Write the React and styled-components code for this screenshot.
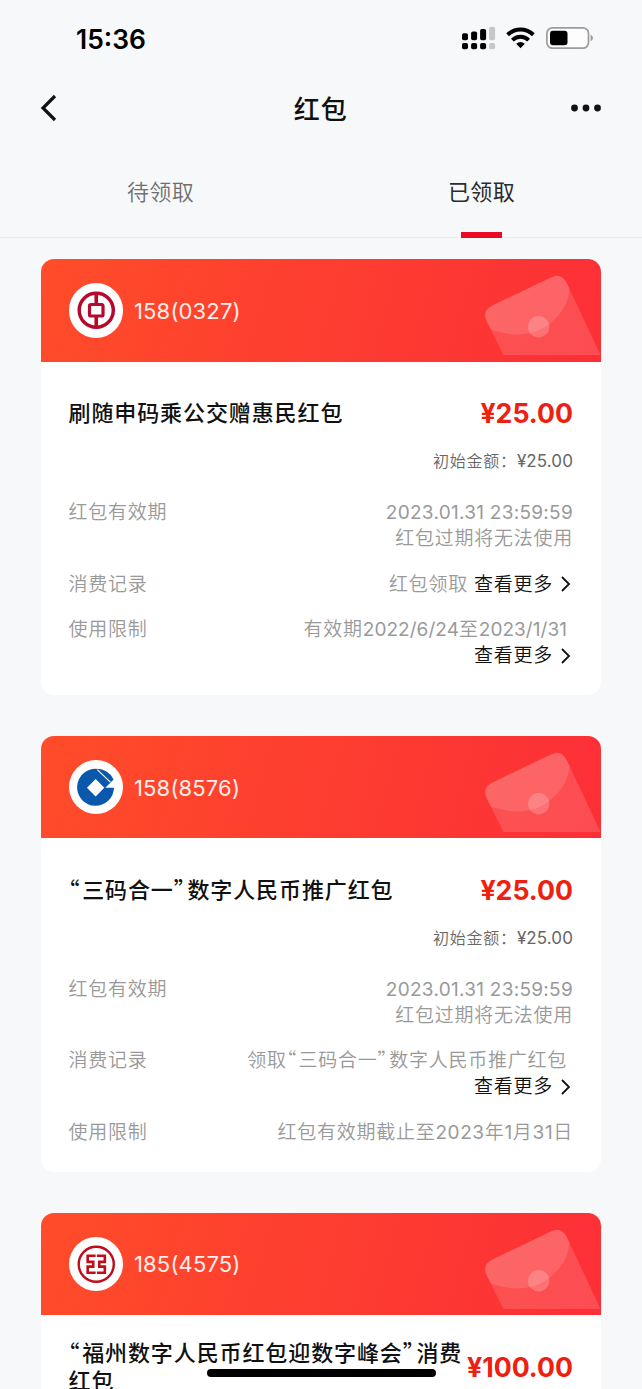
import styled, { createGlobalStyle, css } from 'styled-components';

const GlobalStyle = createGlobalStyle`
    * {
        box-sizing: border-box;
    }
    body {
        margin: 0;
        background: #f7f8fa;
        font-family: Inter, "Noto Sans CJK SC", sans-serif;
        color: #111;
    }
`

const packets = [
    {
        bank: 'boc',
        account: '158(0327)',
        title: '刷随申码乘公交赠惠民红包',
        amount: '¥25.00',
        record: '红包领取',
        limit: '有效期2022/6/24至2023/1/31',
        limitMore: true,
    },
    {
        bank: 'ccb',
        account: '158(8576)',
        title: '“三码合一”数字人民币推广红包',
        amount: '¥25.00',
        record: '领取“三码合一”数字人民币推广红包',
        limit: '红包有效期截止至2023年1月31日',
    },
    {
        bank: 'icbc',
        account: '185(4575)',
        title: '“福州数字人民币红包迎数字峰会”消费红包',
        amount: '¥100.00',
        record: '红包领取',
        limit: '红包有效期截止至2023年1月31日',
    },
];

// latin digits and curly quotes need their own spacing next to chinese text
function mixed(text)
{
    return text.split(/([“”]|[\d/]+)/).map((part, i) => {
        if (/[“”]/.test(part)) return <Quote key={i}>{part}</Quote>;
        if (/\//.test(part)) return <Num key={i}>{part}</Num>;
        if (/\d/.test(part)) return <Num key={i} $track=".6px">{part}</Num>;
        return part;
    });
}

function StatusIcons()
{
    return(
        <svg width="134" height="26" viewBox="460 25 134 26">
            <g fill="#000">
                <rect x="462" y="33.3" width="6" height="7" rx="1.8" />
                <rect x="471.1" y="31.5" width="6" height="8.8" rx="1.8" />
                <rect x="480.1" y="29" width="6" height="11.3" rx="1.8" />
                <rect x="462" y="43" width="6" height="6.3" rx="1.8" />
                <rect x="471.1" y="43" width="6" height="6.3" rx="1.8" />
                <rect x="480.1" y="43" width="6" height="6.3" rx="1.8" />
            </g>
            <g fill="#c6c7c9">
                <rect x="489.1" y="26.7" width="6" height="13.6" rx="1.8" />
                <rect x="489.1" y="43" width="6" height="6.3" rx="1.8" />
            </g>
            <g fill="none" stroke="#000" strokeWidth="4">
                <path d="M507.6 34.8 A18.5 18.5 0 0 1 533.4 34.8" />
                <path d="M512.4 40.1 A11.6 11.6 0 0 1 528.6 40.1" />
            </g>
            <path d="M516.2 43.8 Q520.5 40.4 524.8 43.8 L520.5 48.2 Z" fill="#000" />
            <rect x="546.9" y="27.8" width="41.6" height="20.4" rx="5.6" fill="#fdfdfd" stroke="#9b9c9e" strokeWidth="1.7" />
            <rect x="550" y="30.8" width="17.5" height="14.4" rx="3" fill="#000" />
            <path d="M590.6 34.8 Q593 35.8 593 38 Q593 40.2 590.6 41.2 Z" fill="#9b9c9e" />
        </svg>
    );
}

function BankLogo({ bank })
{
    if (bank === 'boc') {
        return(
            <LogoArt viewBox="0 0 54 54" fill="none" stroke="#b5092d">
                <circle cx="27" cy="27" r="16.9" strokeWidth="3.4" />
                <path d="M27 10 V21 M27 33 V44" strokeWidth="3.6" />
                <rect x="20.3" y="21.3" width="13.4" height="11.4" rx="1.6" strokeWidth="3.2" />
            </LogoArt>
        );
    }
    if (bank === 'ccb') {
        return(
            <LogoArt viewBox="0 0 54 54">
                <path d="M27 8.8 A18.3 18.3 0 1 0 44.6 27.6 H36 L44.2 19.2 A18.2 18.2 0 0 0 27 8.8 Z" fill="#0a58ab" />
                <path d="M26.4 18.9 L35 27.5 L26.4 36.1 L17.8 27.5 Z" fill="#fff" />
                <path d="M28 9.6 L41 22" stroke="#fff" strokeWidth="1.1" />
            </LogoArt>
        );
    }
    return(
        <LogoArt viewBox="0 0 54 54" fill="none" stroke="#c00d1c">
            <circle cx="27" cy="27" r="17.4" strokeWidth="2.4" />
            <path d="M26.4 18.6 H18.5 V24.6 H24 V29.4 H18.5 V35.4 H26.4" strokeWidth="2.6" />
            <path d="M27.6 18.6 H35.5 V24.6 H30 V29.4 H35.5 V35.4 H27.6" strokeWidth="2.6" />
        </LogoArt>
    );
}

function PacketCard({ packet })
{
    return(
        <Card>
            <CardHead>
                <LogoCircle>
                    <BankLogo bank={packet.bank} />
                </LogoCircle>
                <Account>{packet.account}</Account>
                <Envelope viewBox="0 0 116 80">
                    <path d="M18.5 80 L2 47 Q-4 36 8 30.3 L66 2.4 Q76.5 -2.6 82 8.5 L115.5 80 Z" fillOpacity=".14" />
                    <path d="M5.8 54.6 C28 62.5 50 61 65 48.5 C76 39.5 83 29 84.6 14 L82 8.5 Q76.5 -2.6 66 2.4 L8 30.3 Q-4 36 2 47 Z" fillOpacity=".12" />
                    <circle cx="53.7" cy="51.7" r="10.7" fillOpacity=".2" />
                </Envelope>
            </CardHead>
            <CardBody>
                <TitleRow>
                    <Title>{mixed(packet.title)}</Title>
                    <Amount>{packet.amount}</Amount>
                </TitleRow>
                <Initial>初始金额：<SmallNum>¥25.00</SmallNum></Initial>
                <Row>
                    <Label>红包有效期</Label>
                    <Value>
                        <Num $track=".28px">2023.01.31 23:59:59</Num><br />红包过期将无法使用
                    </Value>
                </Row>
                <Row>
                    <Label>消费记录</Label>
                    <Value>
                        <Text $linked>{mixed(packet.record)}</Text>
                        <MoreLink />
                    </Value>
                </Row>
                <Row>
                    <Label>使用限制</Label>
                    <Value>
                        <Text $linked={packet.limitMore}>{mixed(packet.limit)}</Text>
                        {packet.limitMore && <MoreLink />}
                    </Value>
                </Row>
            </CardBody>
        </Card>
    );
}

function MoreLink()
{
    return(
        <More>
            查看更多
            <svg width="10" height="16" viewBox="0 0 10 16" fill="none" stroke="#111" strokeWidth="1.8">
                <path d="M1 1 L8 8 L1 15" />
            </svg>
        </More>
    );
}

function App()
{
    return(
        <Screen>
            <GlobalStyle />
            <StatusBar>
                <Clock>15:36</Clock>
                <StatusIcons />
            </StatusBar>
            <NavBar>
                <svg width="18" height="28" viewBox="0 0 18 28" fill="none" stroke="#111" strokeWidth="3.2">
                    <path d="M15 2 L3 14 L15 26" />
                </svg>
                <NavTitle>红包</NavTitle>
                <svg width="32" height="8" viewBox="0 0 32 8" fill="#111">
                    <circle cx="4.5" cy="4" r="3.4" />
                    <circle cx="16" cy="4" r="3.4" />
                    <circle cx="27.5" cy="4" r="3.4" />
                </svg>
            </NavBar>
            <Tabs>
                <Tab>待领取</Tab>
                <Tab $active>已领取</Tab>
            </Tabs>
            <List>
                {packets.map((packet) => <PacketCard key={packet.account} packet={packet} />)}
            </List>
            <HomeIndicator />
        </Screen>
    );
}

const Screen = styled.div`
    position: relative;
    width: 642px;
    height: 1389px;
    overflow: hidden;
    background: #f7f8fa;
`

const StatusBar = styled.div`
    display: flex;
    align-items: center;
    justify-content: space-between;
    height: 76px;
    padding: 0 48px 0 76px;
`

const Clock = styled.div`
    padding-top: 1px;
    font-size: 26.4px;
    font-weight: 600;
    color: #000;
`

const NavBar = styled.div`
    display: flex;
    align-items: center;
    justify-content: space-between;
    height: 64px;
    padding: 0 40px 0 39.5px;
`

const NavTitle = styled.div`
    padding-bottom: 2px;
    font-size: 26px;
    font-weight: 500;
    letter-spacing: 1px;
    margin-left: 14px;
`

const Tabs = styled.div`
    display: flex;
    height: 98px;
    border-bottom: 1px solid #ebecee;
`

const Tab = styled.div`
    position: relative;
    flex: 1;
    padding-top: 35px;
    font-size: 22px;
    font-weight: 350;
    line-height: 34px;
    letter-spacing: .4px;
    text-align: center;
    color: #6f7072;
    ${(p) => p.$active && css`
        font-weight: 400;
        color: #2b2c2e;
        &::after {
            content: "";
            position: absolute;
            left: 140px;
            bottom: -1px;
            width: 41px;
            height: 6px;
            background: #ea0a26;
        }
    `}
`

const List = styled.div`
    display: flex;
    flex-direction: column;
    gap: 41px;
    padding: 21px 41px 0;
`

const Card = styled.div`
    flex: none;
    border-radius: 13px;
    background: #fff;
    overflow: hidden;
`

const CardHead = styled.div`
    display: flex;
    align-items: center;
    height: 102.5px;
    padding-left: 27.5px;
    background: linear-gradient(105deg, #ff4c29 0%, #fc2f37 100%);
`

const LogoCircle = styled.div`
    width: 54.5px;
    height: 54.5px;
    border-radius: 50%;
    background: #fff;
`

const LogoArt = styled.svg`
    display: block;
    width: 54.5px;
    height: 54.5px;
`

const Account = styled.div`
    margin: 1px 0 0 11px;
    font-size: 22px;
    letter-spacing: .15px;
    color: #ffeeea;
`

const Envelope = styled.svg`
    width: 116px;
    height: 80px;
    margin: 9.5px 0 0 auto;
    fill: #fff;
`

const CardBody = styled.div`
    padding: 23.5px 28px 26px 27.5px;
`

const TitleRow = styled.div`
    display: flex;
    align-items: center;
    justify-content: space-between;
    height: 56px;
`

const Title = styled.div`
    width: 397px;
    font-size: 22px;
    font-weight: 500;
    line-height: 28px;
    letter-spacing: .9px;
`

const Amount = styled.div`
    font-size: 26.7px;
    font-weight: 700;
    color: #ee2010;
`

const Initial = styled.div`
    margin: 8px 0 27px;
    font-size: 16px;
    font-weight: 350;
    line-height: 24px;
    letter-spacing: .8px;
    text-align: right;
    color: #666;
`

const SmallNum = styled.span`
    font-size: 17px;
    font-weight: 400;
    letter-spacing: .1px;
`

const Row = styled.div`
    display: flex;
    justify-content: space-between;
    font-size: 19px;
    font-weight: 350;
    line-height: 25.75px;
    letter-spacing: .75px;
    color: #999;
    & + & {
        margin-top: 20px;
    }
`

const Label = styled.div`
    white-space: nowrap;
`

const Value = styled.div`
    max-width: 330px;
    text-align: right;
`

const Text = styled.span`
    display: inline-block;
    white-space: nowrap;
    margin-right: ${(p) => (p.$linked ? '6px' : 0)};
`

const Num = styled.span`
    font-weight: 400;
    letter-spacing: ${(p) => p.$track || '.05px'};
`

const Quote = styled.span`
    font-family: "Noto Sans CJK SC", sans-serif;
    font-feature-settings: "halt";
    line-height: 0;
    letter-spacing: .12em;
`

const More = styled.span`
    display: inline-flex;
    align-items: center;
    vertical-align: top;
    color: #111;
    svg {
        margin: 0 2px 0 8px;
    }
`

const HomeIndicator = styled.div`
    position: absolute;
    left: 207px;
    bottom: 12px;
    width: 229px;
    height: 8px;
    border-radius: 4px;
    background: #000;
`

export default App;
